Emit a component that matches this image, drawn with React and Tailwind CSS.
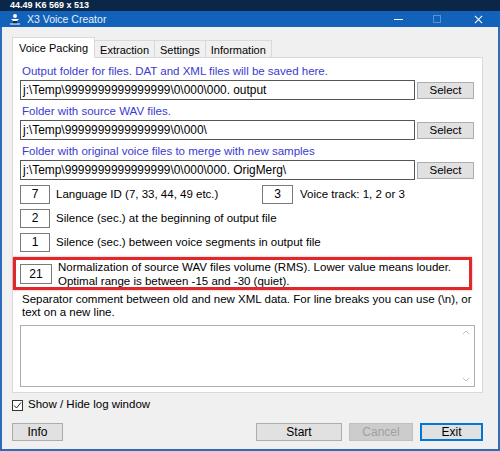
import React from 'react'

const Label = ({ children }) => (
  <div className="h-[14px] leading-[14px] pl-[2px] text-[#3a3ad2]">{children}</div>
)

const PathRow = ({ value }) => (
  <div className="flex items-center h-[20px] mt-[2px]">
    <div className="w-[395px] h-[20px] border border-[#555] bg-white pl-[2px] leading-[18px] text-[11.9px] whitespace-nowrap overflow-hidden">{value}</div>
    <button className="ml-[2px] w-[57px] h-[17px] bg-[#e1e1e1] border border-[#adadad] leading-[15px] text-center">Select</button>
  </div>
)

const NumBox = ({ v, className = '' }) => (
  <div className={'w-[30px] h-[19px] border border-[#7a7a7a] bg-white text-center leading-[17px] text-[12px] shrink-0 ' + className}>{v}</div>
)

const Tab = ({ label, active }) =>
  active ? (
    <div className="h-[21px] px-[6px] bg-white border border-b-0 border-[#d9d9d9] leading-[20px] relative z-10">{label}</div>
  ) : (
    <div className="h-[18px] px-[5px] bg-[#f0f0f0] border border-l-0 border-b-0 border-[#d9d9d9] leading-[18px]">{label}</div>
  )

export default function App() {
  return (
    <div className="w-[500px] h-[451px] flex flex-col bg-[#f0f0f0] text-[11.5px] text-black font-['Liberation_Sans',Arial,sans-serif] overflow-hidden">
      <div className="h-[11px] bg-[#0b2747] text-white font-bold text-[9px] leading-[11px] pl-[10px]">44.49 K6 569 x 513</div>
      <div className="h-[16px] bg-[#1162b8] flex items-center text-white">
        <svg width="12" height="12" viewBox="0 0 12 12" className="ml-[9px]">
          <circle cx="6" cy="3" r="2" fill="#fff" />
          <path d="M2 6h8l-2 2h-4z" fill="#fff" />
          <path d="M4 8h4v3h-4z" fill="#1b2a3a" />
          <path d="M1 11h10" stroke="#fff" strokeWidth="1" />
        </svg>
        <span className="ml-[6px] text-[10.5px] leading-[16px] text-[#e8f0fa]">X3 Voice Creator</span>
        <div className="ml-auto flex items-center h-full">
          <div className="w-[9px] h-[1px] bg-white mr-[30px]" />
          <div className="w-[8px] h-[8px] border border-[#5d8fcc] mr-[33px]" />
          <svg width="9" height="9" viewBox="0 0 10 10" className="mr-[17px]">
            <path d="M1 1L9 9M9 1L1 9" stroke="#fff" strokeWidth="1.2" />
          </svg>
        </div>
      </div>
      <div className="flex-1 flex flex-col border-l-2 border-r-2 border-b-2 border-[#2e6bb8] pl-[10px] pr-[15px] pt-[10px]">
        <div className="flex items-end h-[21px] -mb-[1px] text-[11px]">
          <Tab label="Voice Packing" active />
          <Tab label="Extraction" />
          <Tab label="Settings" />
          <Tab label="Information" />
        </div>
        <div className="h-[336px] bg-white border border-[#d9d9d9] pl-[7px] pt-[6px]">
          <Label>Output folder for files. DAT and XML files will be saved here.</Label>
          <PathRow value="j:\Temp\9999999999999999\0\000\000. output" />
          <div className="mt-[4px]"><Label>Folder with source WAV files.</Label></div>
          <PathRow value="j:\Temp\9999999999999999\0\000\" />
          <div className="mt-[4px]"><Label>Folder with original voice files to merge with new samples</Label></div>
          <PathRow value="j:\Temp\9999999999999999\0\000\000. OrigMerg\" />
          <div className="flex items-center mt-[5px]">
            <NumBox v="7" />
            <span className="ml-[6px] w-[206px]">Language ID (7, 33, 44, 49 etc.)</span>
            <NumBox v="3" className="w-[31px]" />
            <span className="ml-[7px]">Voice track: 1, 2 or 3</span>
          </div>
          <div className="flex items-center mt-[5px]">
            <NumBox v="2" />
            <span className="ml-[6px]">Silence (sec.) at the beginning of output file</span>
          </div>
          <div className="flex items-center mt-[5px]">
            <NumBox v="1" />
            <span className="ml-[6px]">Silence (sec.) between voice segments in output file</span>
          </div>
          <div className="mt-[5px] -ml-[7px] w-[459px] h-[33px] border-[3px] border-[#e0282c] shadow-[0_0_2px_rgba(200,0,0,0.4)] flex items-center pl-[4px]">
            <div className="w-[32px] h-[20px] border border-[#7a7a7a] bg-white text-center leading-[18px] text-[12px] shrink-0">21</div>
            <div className="ml-[6px] leading-[14px]">
              <div>Normalization of source WAV files volume (RMS). Lower value means louder.</div>
              <div>Optimal range is between -15 and -30 (quiet).</div>
            </div>
          </div>
          <div className="mt-[3px] pl-[2px] leading-[13px]">
            <div>Separator comment between old and new XML data. For line breaks you can use (\n), or</div>
            <div>text on a new line.</div>
          </div>
          <div className="mt-[6px] w-[455px] h-[62px] border border-[#adadad] bg-white flex justify-end">
            <div className="w-[16px] flex flex-col justify-between items-center py-[4px]">
              <svg width="8" height="5" viewBox="0 0 8 5"><path d="M1 4L4 1L7 4" stroke="#c0c0c0" fill="none" /></svg>
              <svg width="8" height="5" viewBox="0 0 8 5"><path d="M1 1L4 4L7 1" stroke="#c0c0c0" fill="none" /></svg>
            </div>
          </div>
        </div>
        <div className="flex items-center mt-[6px] h-[12px]">
          <div className="w-[11px] h-[11px] border border-[#333] bg-white flex items-center justify-center">
            <svg width="9" height="9" viewBox="0 0 9 9"><path d="M1 4.5L3.5 7L8 1.5" stroke="#222" strokeWidth="1" fill="none" /></svg>
          </div>
          <span className="ml-[5px] text-[11.5px]">Show / Hide log window</span>
        </div>
        <div className="flex items-center mt-[12px] h-[18px] text-[12px]">
          <button className="w-[51px] h-[18px] bg-[#e1e1e1] border border-[#adadad] leading-[16px]">Info</button>
          <button className="ml-[193px] w-[86px] h-[18px] bg-[#e1e1e1] border border-[#adadad] leading-[16px]">Start</button>
          <button className="ml-[7px] w-[64px] h-[18px] bg-[#cccccc] border border-[#bfbfbf] text-[#a0a0a0] leading-[16px]">Cancel</button>
          <button className="ml-[7px] w-[63px] h-[18px] bg-[#e1e1e1] border-2 border-[#0078d7] leading-[14px]">Exit</button>
        </div>
      </div>
    </div>
  )
}
